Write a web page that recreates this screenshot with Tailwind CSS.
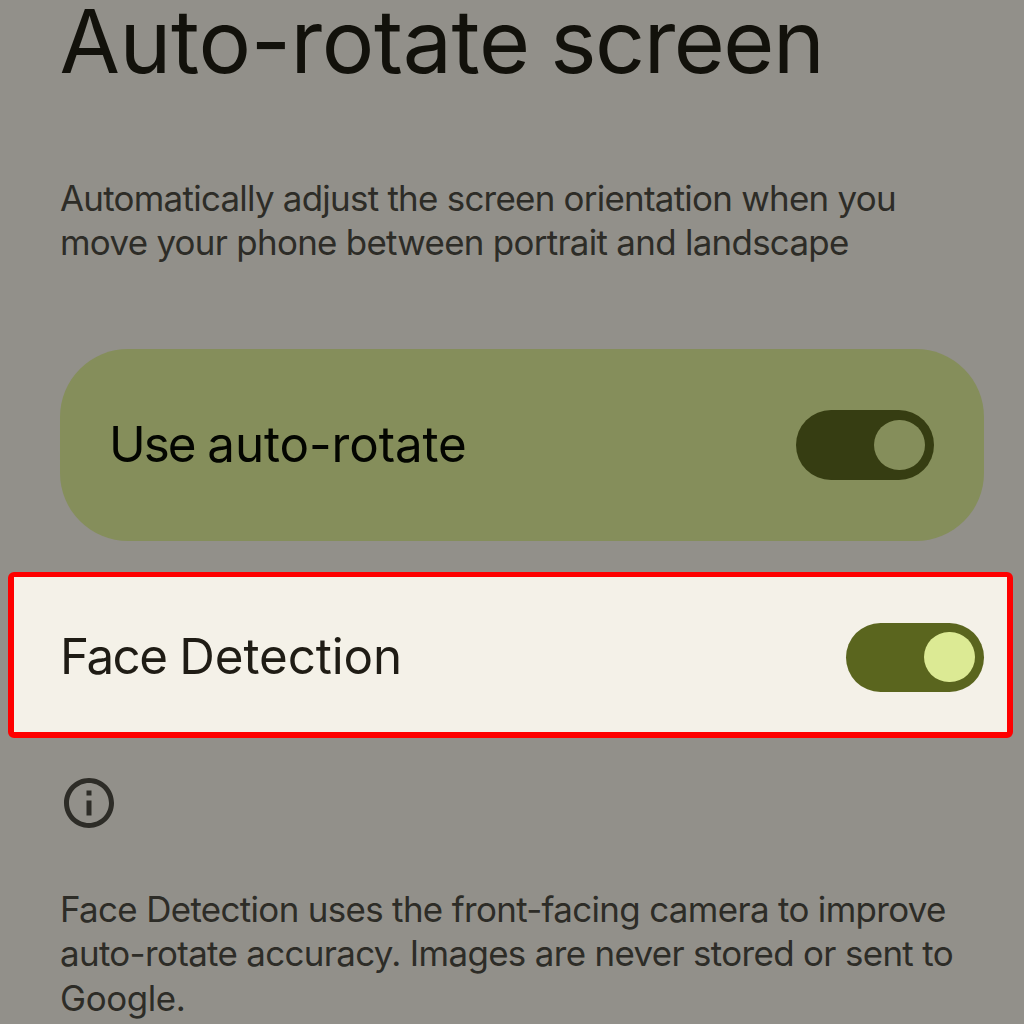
<!DOCTYPE html>
<html lang="en">
<head>
<meta charset="utf-8">
<title>Auto-rotate screen</title>
<script src="https://cdn.jsdelivr.net/npm/@tailwindcss/browser@4"></script>
</head>
<body class="bg-[#92908a]">
<main class="flex h-[1024px] w-[1024px] flex-col overflow-hidden bg-[#92908a] font-['Inter',sans-serif] text-[#2d2c27]">
  <h1 class="mt-px ml-[59.5px] text-[87.7px] leading-[80px] whitespace-nowrap text-[#12110b]"><span class="tracking-[-0.4px]">Auto-rotate</span><span class="tracking-[-4px]"> </span><span class="tracking-[-1.5px]">screen</span></h1>

  <p class="mt-[94.5px] ml-[60px] text-[34.9px] leading-[44.5px] whitespace-nowrap">
    <span class="block tracking-[-0.73px]">Automatically adjust the screen orientation when you</span>
    <span class="block tracking-[-0.7px]">move your phone between portrait and landscape</span>
  </p>

  <section class="mt-[84.5px] ml-[60px] flex h-[192px] w-[924px] items-center justify-between rounded-[68px] bg-[#858e5b] pr-[50px] pl-[49px]">
    <span class="pb-[2px] text-[49.3px] leading-[60px] text-[#030500]"><span class="tracking-[-2px]">Use</span><span class="tracking-[-1px]"> </span><span class="tracking-[-0.1px]">auto-rotate</span></span>
    <span class="flex h-[69.5px] w-[138.5px] items-center justify-end rounded-full bg-[#363d12] pr-[9.5px]">
      <span class="size-[50.5px] rounded-full bg-[#858e5b]"></span>
    </span>
  </section>

  <section class="mt-[31px] ml-[8px] flex h-[166px] w-[1005px] items-center justify-between rounded-[6px] border-[6px] border-t-[5px] border-[#fe0000] bg-[#f4f1e8] pr-[23px] pl-[46px]">
    <span class="pt-[2px] text-[49.3px] leading-[60px] text-[#1f1c15]"><span class="tracking-[-1.5px]">Face</span><span class="tracking-[-1px]"> </span><span class="tracking-[-0.1px]">Detection</span></span>
    <span class="mt-[5px] flex h-[69px] w-[138.5px] items-center justify-end rounded-full bg-[#5a651e] pr-[9.5px]">
      <span class="size-[50.5px] rounded-full bg-[#dcea94]"></span>
    </span>
  </section>

  <svg class="mt-[35px] ml-[59.3px] size-[60px] shrink-0" viewBox="0 0 24 24" fill="#2d2c27">
    <path d="M11 7h2v2h-2zm0 4h2v6h-2zm1-9C6.480 2 2 6.480 2 12s4.480 10 10 10 10-4.480 10-10S17.520 2 12 2zm0 18c-4.410 0-8-3.590-8-8s3.590-8 8-8 8 3.590 8 8-3.590 8-8 8z"/>
  </svg>

  <p class="mt-[53.5px] ml-[60px] text-[34.9px] leading-[44.5px] whitespace-nowrap">
    <span class="block tracking-[-0.65px]">Face Detection uses the front-facing camera to improve</span>
    <span class="block tracking-[-0.65px]">auto-rotate accuracy. Images are never stored or sent to</span>
    <span class="block tracking-[-0.4px]">Google.</span>
  </p>
</main>
</body>
</html>
